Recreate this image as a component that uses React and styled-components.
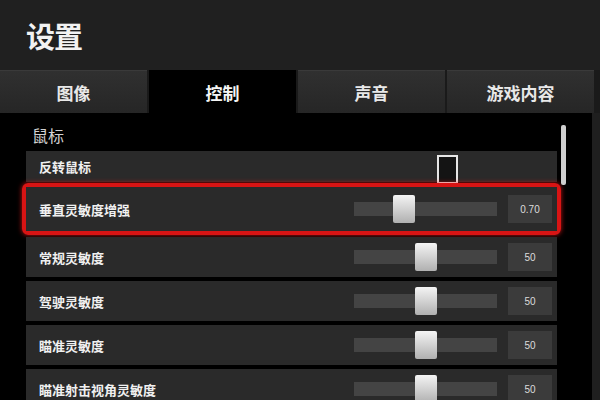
import React from 'react';
import styled, { createGlobalStyle } from 'styled-components';

const GlobalStyle = createGlobalStyle`
  html, body {
    margin: 0;
    padding: 0;
    background: #000;
  }
  body {
    font-family: "Noto Sans CJK SC", "Noto Sans", sans-serif;
  }
`;

const tabs = ['图像', '控制', '声音', '游戏内容'];

const sliders = [
  { label: '常规灵敏度', pos: 0.5, value: '50' },
  { label: '驾驶灵敏度', pos: 0.5, value: '50' },
  { label: '瞄准灵敏度', pos: 0.5, value: '50' },
  { label: '瞄准射击视角灵敏度', pos: 0.5, value: '50' },
];

const Slider = ({ pos, value }) => (
  <Controls>
    <Track>
      <Thumb style={{ left: `${pos * 121}px` }} />
    </Track>
    <ValueBox>{value}</ValueBox>
  </Controls>
);

const App = () => {
  const active = 1;

  return (
    <Page>
      <GlobalStyle />
      <Header>
        <Title>设置</Title>
      </Header>
      <TabBar>
        {tabs.map((t, i) => (
          <Tab key={t} active={i === active}>{t}</Tab>
        ))}
      </TabBar>
      <Content>
        <Section>鼠标</Section>
        <List>
          <Row small>
            <Label>反转鼠标</Label>
            <Checkbox />
          </Row>
          <Highlight>
            <Row tall>
              <Label>垂直灵敏度增强</Label>
              <Slider pos={0.32} value="0.70" />
            </Row>
          </Highlight>
          {sliders.map((s) => (
            <Row key={s.label}>
              <Label>{s.label}</Label>
              <Slider pos={s.pos} value={s.value} />
            </Row>
          ))}
        </List>
        <Scrollbar />
      </Content>
    </Page>
  );
};

const Page = styled.div`
  width: 600px;
  height: 400px;
  overflow: hidden;
  display: flex;
  flex-direction: column;
  background: #1f1f1f;
`;

const Header = styled.div`
  height: 70px;
  flex-shrink: 0;
  display: flex;
  align-items: center;
  padding-left: 26px;
  background: #202020;
`;

const Title = styled.div`
  font-size: 29px;
  font-weight: 700;
  color: #f2f2f2;
  letter-spacing: -1px;
  margin-top: -1px;
`;

const TabBar = styled.div`
  height: 43px;
  flex-shrink: 0;
  display: grid;
  grid-template-columns: repeat(4, 147px);
  column-gap: 2px;
  background: #1a1a1a;
`;

const Tab = styled.div`
  display: flex;
  align-items: center;
  justify-content: center;
  font-size: 17px;
  font-weight: 700;
  color: ${(p) => (p.active ? '#f5f5f5' : '#e8e8e8')};
  background: ${(p) =>
    p.active ? '#000' : 'linear-gradient(#303030, #262626)'};
  border-top: 1px solid ${(p) => (p.active ? '#000' : '#3a3a3a')};
`;

const Content = styled.div`
  flex: 1;
  position: relative;
  background: #000;
  padding-left: 26px;
  margin-right: 8px;
`;

const Section = styled.div`
  padding: 6px 0 0 6px;
  line-height: 32px;
  font-size: 16px;
  color: #d2d2d2;
`;

const List = styled.div`
  width: 531px;
  display: flex;
  flex-direction: column;
  gap: 4px;
`;

const Row = styled.div`
  height: ${(p) => (p.small ? 31 : p.tall ? 44 : 40)}px;
  display: flex;
  align-items: center;
  padding: 0 5px 0 13px;
  background: #2a2a2a;
`;

const Highlight = styled.div`
  margin: -3px -4px -2px;
  border: 4px solid #d81414;
  border-radius: 6px;
  box-shadow: 0 0 5px rgba(255, 30, 30, 0.75);
`;

const Label = styled.div`
  flex: 1;
  font-size: 13px;
  font-weight: 700;
  color: #f0f0f0;
`;

const Checkbox = styled.div`
  width: 17px;
  height: 25px;
  margin: 3px 94px -3px 0;
  border: 2px solid #e6e6e6;
  background: #141414;
`;

const Controls = styled.div`
  display: flex;
  align-items: center;
  gap: 11px;
`;

const Track = styled.div`
  position: relative;
  width: 143px;
  height: 14px;
  background: #444;
`;

const Thumb = styled.div`
  position: absolute;
  top: -7px;
  width: 22px;
  height: 28px;
  border-radius: 2px;
  background: linear-gradient(#f4f4f4, #b0b0b0);
`;

const ValueBox = styled.div`
  width: 44px;
  height: 28px;
  display: flex;
  align-items: center;
  justify-content: center;
  background: #3b3b3b;
  font-family: "Liberation Sans", sans-serif;
  font-size: 10px;
  color: #dcdcdc;
`;

const Scrollbar = styled.div`
  position: absolute;
  left: 561px;
  top: 12px;
  width: 5px;
  height: 60px;
  border-radius: 2px;
  background: #cfcfcf;
`;

export default App;
